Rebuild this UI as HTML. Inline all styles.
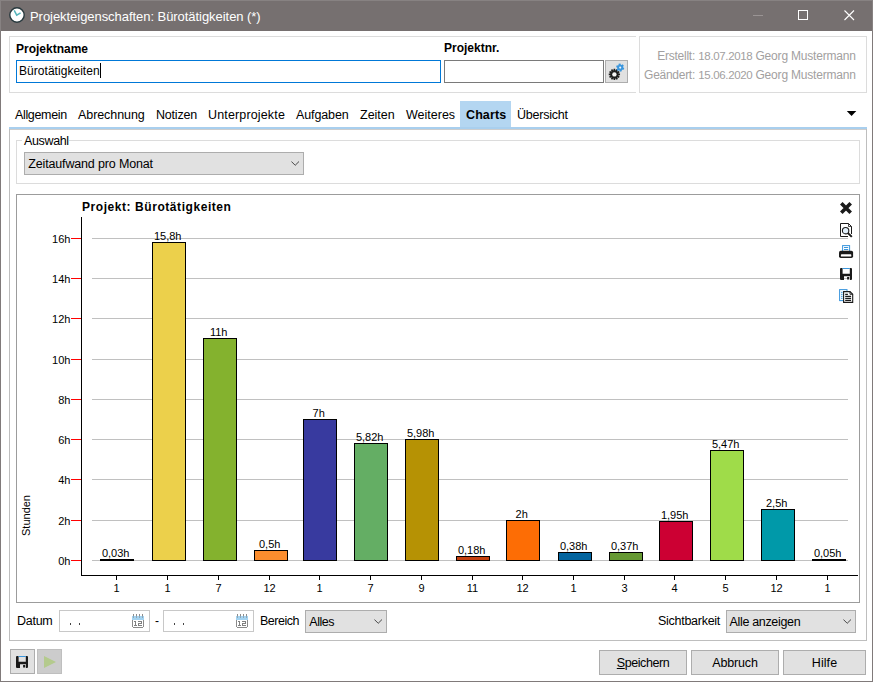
<!DOCTYPE html>
<html>
<head>
<meta charset="utf-8">
<title>Projekteigenschaften</title>
<style>
html,body{margin:0;padding:0;}
body{width:873px;height:682px;overflow:hidden;background:#fff;position:relative;
 font-family:"Liberation Sans",sans-serif;font-size:12px;color:#000;}
.a{position:absolute;white-space:nowrap;}
.box{position:absolute;box-sizing:border-box;}
#titlebar{left:0;top:0;width:873px;height:31px;background:#767070;}
#title{left:30px;top:9px;color:#fff;font-size:13px;line-height:15px;letter-spacing:-0.05px;}
#frameL{left:0;top:31px;width:1px;height:651px;background:#807a7a;}
#frameR{left:872px;top:31px;width:1px;height:651px;background:#807a7a;}
#frameB{left:0;top:681px;width:873px;height:1px;background:#807a7a;}
.lbl{font-size:12px;line-height:14px;}
.b{font-weight:bold;}
.meta{color:#a2a0a0;}
.tab{font-size:12.5px;line-height:14px;top:108px;}
.ct{position:absolute;white-space:nowrap;font-size:11px;line-height:13px;text-align:center;color:#000;}
.btn{position:absolute;box-sizing:border-box;background:#e1e1e1;border:1px solid #adadad;text-align:center;font-size:12.5px;line-height:24px;}
.combo{position:absolute;box-sizing:border-box;background:#e1e1e1;border:1px solid #adadad;font-size:12.5px;line-height:22px;padding-left:3.3px;}
</style>
</head>
<body>
<!-- title bar -->
<div class="box" id="titlebar" style="border:1px solid #878282;border-bottom:none;"></div>
<svg class="a" style="left:8px;top:6px" width="18" height="18" viewBox="0 0 18 18">
 <circle cx="9" cy="9" r="7.2" fill="#fff" stroke="#27383d" stroke-width="1.4"/>
 <path d="M6.2 4.4 L8.7 9.2 L12.6 6.8" fill="none" stroke="#56b5bc" stroke-width="1.5"/>
</svg>
<div class="a" id="title">Projekteigenschaften: Bürotätigkeiten (*)</div>
<svg class="a" style="left:745px;top:5px" width="120" height="22" viewBox="0 0 120 22">
 <rect x="8" y="10" width="10" height="1" fill="#9a9494"/>
 <rect x="53.5" y="5.5" width="9" height="9" fill="none" stroke="#fff" stroke-width="1"/>
 <path d="M99.5 5.5 L109 15 M109 5.5 L99.5 15" stroke="#fff" stroke-width="1.1" fill="none"/>
</svg>
<div class="box" id="frameL"></div><div class="box" id="frameR"></div><div class="box" id="frameB"></div>

<!-- top panel left -->
<div class="box" style="left:9px;top:36px;width:627px;height:57px;border:1px solid #dcdcdc;border-right:none;"></div>
<div class="a lbl b" style="left:16px;top:42px;">Projektname</div>
<div class="box" style="left:16px;top:60px;width:425px;height:23px;border:1px solid #0078d7;"></div>
<div class="a lbl" style="left:19px;top:64px;letter-spacing:0.04px;">Bürotätigkeiten</div>
<div class="box" style="left:100px;top:63px;width:1px;height:15px;background:#000;"></div>
<div class="a lbl b" style="left:444px;top:41px;">Projektnr.</div>
<div class="box" style="left:444px;top:60px;width:160px;height:23px;border:1px solid #7a7a7a;"></div>
<div class="box" style="left:605px;top:60px;width:23px;height:23px;border:1px solid #adadad;background:#e1e1e1;"></div>
<svg class="a" style="left:606px;top:61px" width="21" height="21" viewBox="0 0 21 21"><path fill="#1e1e1e" d="M12.50,12.48 L14.04,12.60 L14.04,14.20 L12.50,14.32 L12.41,14.66 L13.69,15.53 L12.89,16.92 L11.49,16.24 L11.24,16.49 L11.92,17.89 L10.53,18.69 L9.66,17.41 L9.32,17.50 L9.20,19.04 L7.60,19.04 L7.48,17.50 L7.14,17.41 L6.27,18.69 L4.88,17.89 L5.56,16.49 L5.31,16.24 L3.91,16.92 L3.11,15.53 L4.39,14.66 L4.30,14.32 L2.76,14.20 L2.76,12.60 L4.30,12.48 L4.39,12.14 L3.11,11.27 L3.91,9.88 L5.31,10.56 L5.56,10.31 L4.88,8.91 L6.27,8.11 L7.14,9.39 L7.48,9.30 L7.60,7.76 L9.20,7.76 L9.32,9.30 L9.66,9.39 L10.53,8.11 L11.92,8.91 L11.24,10.31 L11.49,10.56 L12.89,9.88 L13.69,11.27 L12.41,12.14Z"/><circle cx="8.40" cy="13.40" r="2.2" fill="#f6f6f6"/><path fill="#3b97de" d="M17.20,6.46 L18.27,7.09 L17.63,8.85 L16.40,8.64 L15.82,9.12 L15.81,10.37 L13.97,10.69 L13.53,9.52 L12.83,9.27 L11.74,9.88 L10.54,8.45 L11.33,7.48 L11.20,6.74 L10.13,6.11 L10.77,4.35 L12.00,4.56 L12.58,4.08 L12.59,2.83 L14.43,2.51 L14.87,3.68 L15.57,3.93 L16.66,3.32 L17.86,4.75 L17.07,5.72Z"/><circle cx="14.20" cy="6.60" r="1.05" fill="#eef4fa"/></svg>

<!-- top panel right -->
<div class="box" style="left:639px;top:36px;width:228px;height:57px;border:1px solid #dcdcdc;"></div>
<div class="a lbl meta" style="right:178px;top:49px;letter-spacing:-0.25px;">Erstellt:</div><div class="a lbl meta" style="left:698.3px;top:49px;font-size:11.5px;letter-spacing:-0.35px;" id="d1">18.07.2018</div><div class="a lbl meta" style="right:17.2px;top:49px;letter-spacing:-0.19px;" id="g1">Georg Mustermann</div>
<div class="a lbl meta" style="right:178px;top:68px;letter-spacing:-0.27px;">Geändert:</div><div class="a lbl meta" style="left:698.3px;top:68px;font-size:11.5px;letter-spacing:-0.35px;" id="d2">15.06.2020</div><div class="a lbl meta" style="right:17.2px;top:68px;letter-spacing:-0.19px;" id="g2">Georg Mustermann</div>

<!-- tabs -->
<div class="box" style="left:460px;top:101px;width:51px;height:27px;background:#b4d6f1;"></div>
<div class="box" style="left:9px;top:127px;width:858px;height:2px;background:#a9cfee;"></div>
<div class="box" style="left:9px;top:129px;width:858px;height:1px;background:#cdcdcd;"></div>
<div class="a tab" style="left:15px;letter-spacing:-0.34px;">Allgemein</div>
<div class="a tab" style="left:78px;letter-spacing:-0.07px;">Abrechnung</div>
<div class="a tab" style="left:156px;letter-spacing:-0.2px;">Notizen</div>
<div class="a tab" style="left:208px;letter-spacing:0.15px;">Unterprojekte</div>
<div class="a tab" style="left:296px;letter-spacing:-0.11px;">Aufgaben</div>
<div class="a tab" style="left:360px;">Zeiten</div>
<div class="a tab" style="left:406px;">Weiteres</div>
<div class="a tab b" style="left:466px;letter-spacing:0.1px;">Charts</div>
<div class="a tab" style="left:517px;letter-spacing:-0.23px;">Übersicht</div>
<svg class="a" style="left:846px;top:110px" width="12" height="8" viewBox="0 0 12 8"><path d="M0.8 1 H10.3 L5.55 6 Z" fill="#000"/></svg>

<!-- Auswahl group -->
<div class="box" style="left:16px;top:140px;width:844px;height:44px;border:1px solid #dcdcdc;"></div>
<div class="a lbl" style="left:22px;top:134px;background:#fff;padding:0 0 0 2px;font-size:12.5px;letter-spacing:-0.36px;">Auswahl</div>
<div class="combo" style="left:24px;top:152px;width:280px;height:23px;letter-spacing:-0.157px;">Zeitaufwand pro Monat</div>
<svg class="a" style="left:290.6px;top:161.2px" width="9" height="6" viewBox="0 0 9 6"><path d="M0.4 0.5 L4.2 4.3 L8.0 0.5" fill="none" stroke="#484848" stroke-width="1"/></svg>

<!-- chart panel -->
<div class="box" style="left:16px;top:194px;width:844px;height:409px;border:1px solid #9c9c9c;"></div>
<div class="a b" style="left:82px;top:199.6px;font-size:12px;line-height:14px;letter-spacing:0.56px;">Projekt: Bürotätigkeiten</div>
<svg class="a" style="left:0;top:0" width="873" height="682" viewBox="0 0 873 682" shape-rendering="crispEdges">
<rect x="92" y="560" width="756" height="1" fill="#c0c0c0"/>
<rect x="71" y="560" width="10" height="1" fill="#ff0000"/>
<rect x="92" y="520" width="756" height="1" fill="#c0c0c0"/>
<rect x="71" y="520" width="10" height="1" fill="#ff0000"/>
<rect x="92" y="479" width="756" height="1" fill="#c0c0c0"/>
<rect x="71" y="479" width="10" height="1" fill="#ff0000"/>
<rect x="92" y="439" width="756" height="1" fill="#c0c0c0"/>
<rect x="71" y="439" width="10" height="1" fill="#ff0000"/>
<rect x="92" y="399" width="756" height="1" fill="#c0c0c0"/>
<rect x="71" y="399" width="10" height="1" fill="#ff0000"/>
<rect x="92" y="359" width="756" height="1" fill="#c0c0c0"/>
<rect x="71" y="359" width="10" height="1" fill="#ff0000"/>
<rect x="92" y="318" width="756" height="1" fill="#c0c0c0"/>
<rect x="71" y="318" width="10" height="1" fill="#ff0000"/>
<rect x="92" y="278" width="756" height="1" fill="#c0c0c0"/>
<rect x="71" y="278" width="10" height="1" fill="#ff0000"/>
<rect x="92" y="238" width="756" height="1" fill="#c0c0c0"/>
<rect x="71" y="238" width="10" height="1" fill="#ff0000"/>
<rect x="81" y="217" width="1" height="359" fill="#000"/>
<rect x="81" y="575" width="777" height="1" fill="#000"/>
<rect x="100" y="559" width="34" height="2" fill="#000"/>
<rect x="116" y="576" width="1" height="4" fill="#000"/>
<rect x="152" y="242" width="34" height="319" fill="#000"/>
<rect x="153" y="243" width="32" height="317" fill="#ecd04b"/>
<rect x="167" y="576" width="1" height="4" fill="#000"/>
<rect x="203" y="338" width="34" height="223" fill="#000"/>
<rect x="204" y="339" width="32" height="221" fill="#84b22e"/>
<rect x="218" y="576" width="1" height="4" fill="#000"/>
<rect x="254" y="550" width="34" height="11" fill="#000"/>
<rect x="255" y="551" width="32" height="9" fill="#fb8d2e"/>
<rect x="269" y="576" width="1" height="4" fill="#000"/>
<rect x="303" y="419" width="34" height="142" fill="#000"/>
<rect x="304" y="420" width="32" height="140" fill="#383a9f"/>
<rect x="319" y="576" width="1" height="4" fill="#000"/>
<rect x="354" y="443" width="34" height="118" fill="#000"/>
<rect x="355" y="444" width="32" height="116" fill="#64ae64"/>
<rect x="370" y="576" width="1" height="4" fill="#000"/>
<rect x="405" y="439" width="34" height="122" fill="#000"/>
<rect x="406" y="440" width="32" height="120" fill="#b69204"/>
<rect x="421" y="576" width="1" height="4" fill="#000"/>
<rect x="456" y="556" width="34" height="5" fill="#000"/>
<rect x="457" y="557" width="32" height="3" fill="#c4410f"/>
<rect x="472" y="576" width="1" height="4" fill="#000"/>
<rect x="506" y="520" width="34" height="41" fill="#000"/>
<rect x="507" y="521" width="32" height="39" fill="#fd6d05"/>
<rect x="522" y="576" width="1" height="4" fill="#000"/>
<rect x="558" y="552" width="34" height="9" fill="#000"/>
<rect x="559" y="553" width="32" height="7" fill="#04659f"/>
<rect x="573" y="576" width="1" height="4" fill="#000"/>
<rect x="609" y="552" width="34" height="9" fill="#000"/>
<rect x="610" y="553" width="32" height="7" fill="#669933"/>
<rect x="624" y="576" width="1" height="4" fill="#000"/>
<rect x="659" y="521" width="34" height="40" fill="#000"/>
<rect x="660" y="522" width="32" height="38" fill="#cc0033"/>
<rect x="674" y="576" width="1" height="4" fill="#000"/>
<rect x="710" y="450" width="34" height="111" fill="#000"/>
<rect x="711" y="451" width="32" height="109" fill="#9fdc49"/>
<rect x="725" y="576" width="1" height="4" fill="#000"/>
<rect x="761" y="509" width="34" height="52" fill="#000"/>
<rect x="762" y="510" width="32" height="50" fill="#0099a9"/>
<rect x="776" y="576" width="1" height="4" fill="#000"/>
<rect x="812" y="559" width="34" height="2" fill="#000"/>
<rect x="827" y="576" width="1" height="4" fill="#000"/>
</svg>
<div class="ct" style="left:85.7px;top:547px;width:60px">0,03h</div>
<div class="ct" style="left:86.5px;top:582px;width:60px">1</div>
<div class="ct" style="left:137.7px;top:230px;width:60px">15,8h</div>
<div class="ct" style="left:137.5px;top:582px;width:60px">1</div>
<div class="ct" style="left:188.7px;top:326px;width:60px">11h</div>
<div class="ct" style="left:188.5px;top:582px;width:60px">7</div>
<div class="ct" style="left:239.7px;top:538px;width:60px">0,5h</div>
<div class="ct" style="left:239.5px;top:582px;width:60px">12</div>
<div class="ct" style="left:288.7px;top:407px;width:60px">7h</div>
<div class="ct" style="left:289.5px;top:582px;width:60px">1</div>
<div class="ct" style="left:339.7px;top:431px;width:60px">5,82h</div>
<div class="ct" style="left:340.5px;top:582px;width:60px">7</div>
<div class="ct" style="left:390.7px;top:427px;width:60px">5,98h</div>
<div class="ct" style="left:391.5px;top:582px;width:60px">9</div>
<div class="ct" style="left:441.7px;top:544px;width:60px">0,18h</div>
<div class="ct" style="left:442.5px;top:582px;width:60px">11</div>
<div class="ct" style="left:491.7px;top:508px;width:60px">2h</div>
<div class="ct" style="left:492.5px;top:582px;width:60px">12</div>
<div class="ct" style="left:543.7px;top:540px;width:60px">0,38h</div>
<div class="ct" style="left:543.5px;top:582px;width:60px">1</div>
<div class="ct" style="left:594.7px;top:540px;width:60px">0,37h</div>
<div class="ct" style="left:594.5px;top:582px;width:60px">3</div>
<div class="ct" style="left:644.7px;top:509px;width:60px">1,95h</div>
<div class="ct" style="left:644.5px;top:582px;width:60px">4</div>
<div class="ct" style="left:695.7px;top:438px;width:60px">5,47h</div>
<div class="ct" style="left:695.5px;top:582px;width:60px">5</div>
<div class="ct" style="left:746.7px;top:497px;width:60px">2,5h</div>
<div class="ct" style="left:746.5px;top:582px;width:60px">12</div>
<div class="ct" style="left:797.7px;top:547px;width:60px">0,05h</div>
<div class="ct" style="left:797.5px;top:582px;width:60px">1</div>
<div class="ct" style="left:30px;top:555px;width:40.4px;text-align:right">0h</div>
<div class="ct" style="left:30px;top:515px;width:40.4px;text-align:right">2h</div>
<div class="ct" style="left:30px;top:474px;width:40.4px;text-align:right">4h</div>
<div class="ct" style="left:30px;top:434px;width:40.4px;text-align:right">6h</div>
<div class="ct" style="left:30px;top:394px;width:40.4px;text-align:right">8h</div>
<div class="ct" style="left:30px;top:354px;width:40.4px;text-align:right">10h</div>
<div class="ct" style="left:30px;top:313px;width:40.4px;text-align:right">12h</div>
<div class="ct" style="left:30px;top:273px;width:40.4px;text-align:right">14h</div>
<div class="ct" style="left:30px;top:233px;width:40.4px;text-align:right">16h</div>
<div class="ct" style="left:-4px;top:509px;width:60px;transform:rotate(-90deg);">Stunden</div>

<!-- chart toolbar icons -->
<svg class="a" style="left:838px;top:200px" width="16" height="16" viewBox="0 0 16 16"><path d="M3.3 3.3 L12.7 12.7 M12.7 3.3 L3.3 12.7" stroke="#1a1a1a" stroke-width="3.6" stroke-linecap="butt"/></svg>
<svg class="a" style="left:838px;top:222px" width="16" height="16" viewBox="0 0 16 16">
 <path d="M2.5 1.5 H10.5 L13.5 4.5 V14.5 H2.5 Z" fill="#fff" stroke="#1a1a1a" stroke-width="1"/>
 <path d="M10.5 1.5 V4.5 H13.5" fill="none" stroke="#1a1a1a" stroke-width="0.8"/>
 <rect x="10" y="12" width="5" height="4" fill="#fff"/>
 <circle cx="7.6" cy="8.7" r="3.2" fill="#e2f0fb" stroke="#1a1a1a" stroke-width="1.1"/>
 <path d="M10 11.1 L13.8 14.9" stroke="#1a1a1a" stroke-width="2" stroke-linecap="butt"/>
</svg>
<svg class="a" style="left:838px;top:244px" width="16" height="16" viewBox="0 0 16 16">
 <rect x="4.6" y="1.6" width="7" height="6" fill="#fff" stroke="#3a96dd" stroke-width="1"/>
 <rect x="6" y="3" width="4.2" height="1" fill="#3a96dd"/><rect x="6" y="5" width="4.2" height="1" fill="#3a96dd"/>
 <rect x="1" y="6.8" width="14.1" height="7.2" rx="1.8" fill="#1a1a1a"/>
 <rect x="2.9" y="10.2" width="10.4" height="2.4" rx="0.7" fill="#fff"/>
</svg>
<svg class="a" style="left:840px;top:268px" width="12" height="12" viewBox="0 0 12 12">
 <path fill-rule="evenodd" fill="#1a1a1a" d="M1 0 H11 Q12 0 12 1 V11 Q12 12 11 12 H1 Q0 12 0 11 V1 Q0 0 1 0 Z M2.6 0 V5.7 H9.8 V0 Z M4 8.3 V12 H10 V8.3 Z M7.1 9 H9.3 V11.5 H7.1 Z"/>
 <rect x="2.6" y="0" width="7.2" height="1" fill="#3a96dd"/>
</svg>
<svg class="a" style="left:838px;top:288px" width="16" height="16" viewBox="0 0 16 16">
 <rect x="1.6" y="1.6" width="7.4" height="11" fill="#fff" stroke="#3a96dd" stroke-width="1"/>
 <path d="M3 4.3H4.6M3 6.3H4.6M3 8.3H4.6M3 10.3H4.6" stroke="#3a96dd" stroke-width="1"/>
 <path d="M5.6 3.6 H12 L14.7 6.3 V14.4 H5.6 Z" fill="#fff" stroke="#1a1a1a" stroke-width="1.1"/>
 <path d="M12 3.6 V6.3 H14.7" fill="none" stroke="#1a1a1a" stroke-width="0.9"/>
 <path d="M7.2 6.4H9.9M7.2 8.4H13.1M7.2 10.4H13.1M7.2 12.4H13.1" stroke="#1a1a1a" stroke-width="1.1"/>
</svg>

<!-- bottom filter row -->
<div class="box" style="left:9px;top:129px;width:1px;height:511px;background:#bebebe;"></div>
<div class="box" style="left:866px;top:129px;width:1px;height:511px;background:#bebebe;"></div>
<div class="box" style="left:9px;top:640px;width:858px;height:1px;background:#bebebe;"></div>
<div class="a lbl" style="left:17px;top:614px;font-size:12.5px;letter-spacing:-0.26px;">Datum</div>
<div class="box" style="left:59px;top:610px;width:91px;height:22px;border:1px solid #c8c8c8;"></div>
<div class="box" style="left:70px;top:623px;width:1px;height:2px;background:#444;"></div><div class="box" style="left:79px;top:623px;width:1px;height:2px;background:#444;"></div>
<div class="a lbl" style="left:155px;top:614px;">-</div>
<div class="box" style="left:163px;top:610px;width:91px;height:22px;border:1px solid #c8c8c8;"></div>
<div class="box" style="left:174px;top:623px;width:1px;height:2px;background:#444;"></div><div class="box" style="left:183px;top:623px;width:1px;height:2px;background:#444;"></div>
<svg class="a" style="left:132px;top:614px" width="12" height="14" viewBox="0 0 12 14"><g shape-rendering="crispEdges">
 <rect x="1" y="0" width="1" height="4" fill="#8c8c8c"/><rect x="4" y="0" width="1" height="4" fill="#8c8c8c"/><rect x="7" y="0" width="1" height="4" fill="#8c8c8c"/><rect x="10" y="0" width="1" height="4" fill="#8c8c8c"/>
 <rect x="0" y="2" width="12" height="4" fill="#a3d3f1"/>
 <rect x="1" y="2" width="1" height="2" fill="#8fa7b8"/><rect x="4" y="2" width="1" height="2" fill="#8fa7b8"/><rect x="7" y="2" width="1" height="2" fill="#8fa7b8"/><rect x="10" y="2" width="1" height="2" fill="#8fa7b8"/>
 <rect x="0" y="6" width="1" height="7" fill="#8a8a8a"/><rect x="11" y="6" width="1" height="7" fill="#8a8a8a"/><rect x="1" y="13" width="10" height="1" fill="#8a8a8a"/>
 <rect x="1" y="6" width="10" height="7" fill="#fff"/>
 <rect x="2" y="7" width="2" height="1" fill="#808080"/><rect x="3" y="7" width="1" height="4" fill="#808080"/><rect x="2" y="11" width="3" height="1" fill="#808080"/>
 <rect x="6" y="7" width="4" height="1" fill="#808080"/><rect x="9" y="7" width="1" height="3" fill="#808080"/><rect x="6" y="9" width="4" height="1" fill="#808080"/><rect x="6" y="9" width="1" height="3" fill="#808080"/><rect x="6" y="11" width="4" height="1" fill="#808080"/>
</g></svg>
<svg class="a" style="left:236px;top:614px" width="12" height="14" viewBox="0 0 12 14"><g shape-rendering="crispEdges">
 <rect x="1" y="0" width="1" height="4" fill="#8c8c8c"/><rect x="4" y="0" width="1" height="4" fill="#8c8c8c"/><rect x="7" y="0" width="1" height="4" fill="#8c8c8c"/><rect x="10" y="0" width="1" height="4" fill="#8c8c8c"/>
 <rect x="0" y="2" width="12" height="4" fill="#a3d3f1"/>
 <rect x="1" y="2" width="1" height="2" fill="#8fa7b8"/><rect x="4" y="2" width="1" height="2" fill="#8fa7b8"/><rect x="7" y="2" width="1" height="2" fill="#8fa7b8"/><rect x="10" y="2" width="1" height="2" fill="#8fa7b8"/>
 <rect x="0" y="6" width="1" height="7" fill="#8a8a8a"/><rect x="11" y="6" width="1" height="7" fill="#8a8a8a"/><rect x="1" y="13" width="10" height="1" fill="#8a8a8a"/>
 <rect x="1" y="6" width="10" height="7" fill="#fff"/>
 <rect x="2" y="7" width="2" height="1" fill="#808080"/><rect x="3" y="7" width="1" height="4" fill="#808080"/><rect x="2" y="11" width="3" height="1" fill="#808080"/>
 <rect x="6" y="7" width="4" height="1" fill="#808080"/><rect x="9" y="7" width="1" height="3" fill="#808080"/><rect x="6" y="9" width="4" height="1" fill="#808080"/><rect x="6" y="9" width="1" height="3" fill="#808080"/><rect x="6" y="11" width="4" height="1" fill="#808080"/>
</g></svg>
<div class="a lbl" style="left:260px;top:614px;font-size:12.5px;letter-spacing:-0.5px;">Bereich</div>
<div class="combo" style="left:305px;top:610px;width:82px;height:23px;letter-spacing:-0.48px;">Alles</div>
<svg class="a" style="left:373.7px;top:619.2px" width="9" height="6" viewBox="0 0 9 6"><path d="M0.4 0.5 L4.2 4.3 L8.0 0.5" fill="none" stroke="#484848" stroke-width="1"/></svg>
<div class="a lbl" style="left:658px;top:614px;font-size:12.5px;letter-spacing:-0.27px;">Sichtbarkeit</div>
<div class="combo" style="left:726px;top:610px;width:130px;height:23px;letter-spacing:-0.33px;padding-left:2.5px;">Alle anzeigen</div>
<svg class="a" style="left:842.6px;top:619.2px" width="9" height="6" viewBox="0 0 9 6"><path d="M0.4 0.5 L4.2 4.3 L8.0 0.5" fill="none" stroke="#484848" stroke-width="1"/></svg>

<!-- bottom buttons -->
<div class="btn" style="left:10px;top:649px;width:25px;height:25px;"></div>
<svg class="a" style="left:16px;top:656px" width="12" height="12" viewBox="0 0 12 12">
 <path fill-rule="evenodd" fill="#1a1a1a" d="M1 0 H11 Q12 0 12 1 V11 Q12 12 11 12 H1 Q0 12 0 11 V1 Q0 0 1 0 Z M2.6 0 V5.7 H9.8 V0 Z M4 8.3 V12 H10 V8.3 Z M7.1 9 H9.3 V11.5 H7.1 Z"/>
 <rect x="2.6" y="0" width="7.2" height="1" fill="#3a96dd"/>
</svg>
<div class="btn" style="left:37px;top:649px;width:25px;height:25px;background:#cccccc;border-color:#bfbfbf;"></div>
<svg class="a" style="left:43px;top:655px" width="14" height="14" viewBox="0 0 14 14"><path d="M1 1 L13 7 L1 13 Z" fill="#b4ca8d"/></svg>
<div class="btn" style="left:599px;top:650px;width:88px;height:25px;letter-spacing:-0.43px;"><u>S</u>peichern</div>
<div class="btn" style="left:691px;top:650px;width:88px;height:25px;letter-spacing:-0.14px;">Abbruch</div>
<div class="btn" style="left:783px;top:650px;width:83px;height:25px;letter-spacing:0.08px;">Hilfe</div>
</body>
</html>
